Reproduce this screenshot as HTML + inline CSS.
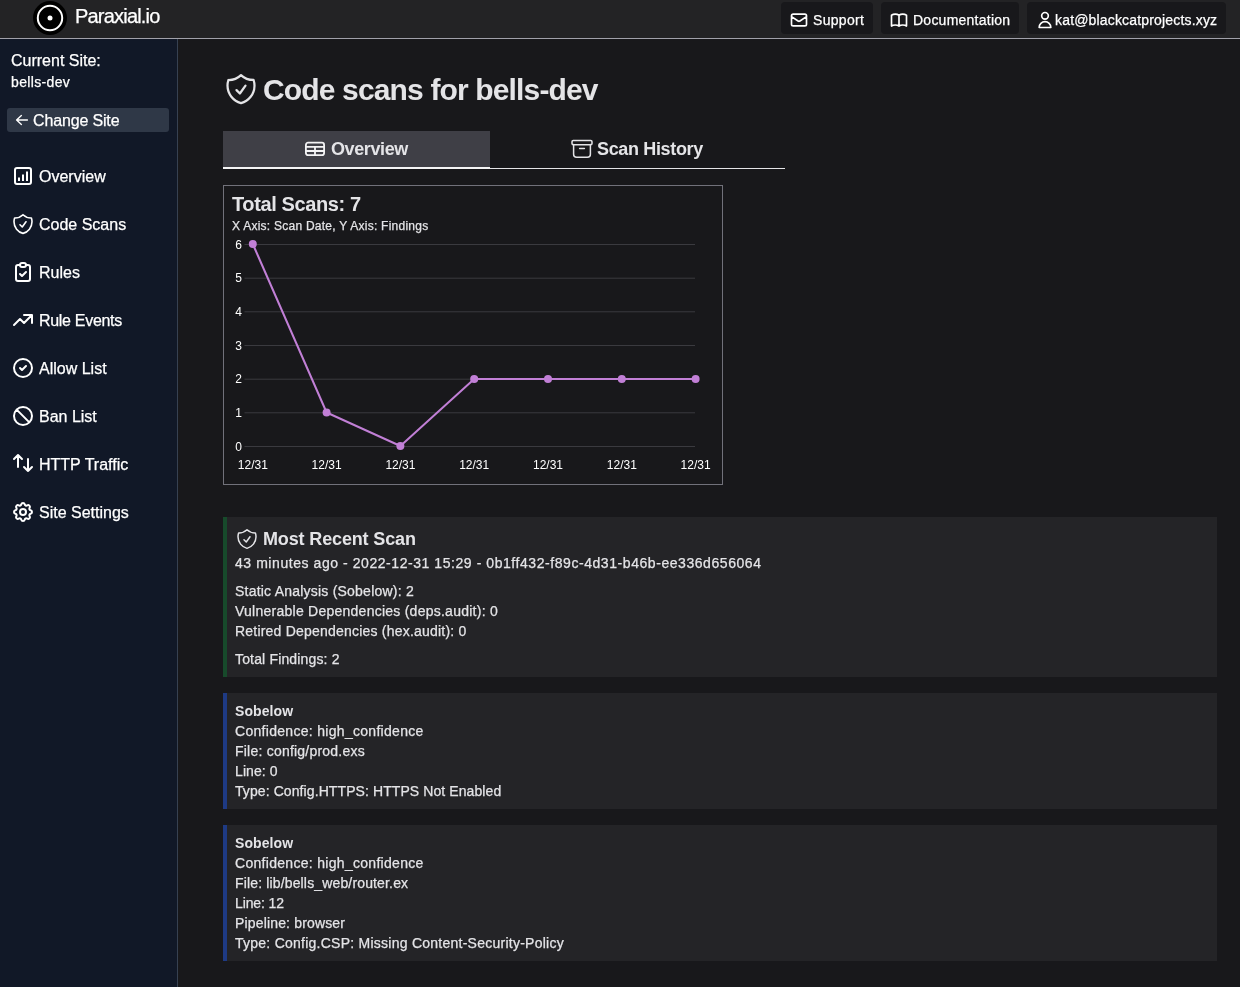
<!DOCTYPE html>
<html><head><meta charset="utf-8">
<style>
html,body{margin:0;padding:0;}
body{width:1240px;height:987px;overflow:hidden;background:#18181b;position:relative;font-family:"Liberation Sans",sans-serif;color:#e4e4e7;}
.a{position:absolute;}
.t{position:absolute;white-space:nowrap;line-height:1;will-change:transform;-webkit-text-stroke:0.25px currentColor;}
.t[style*="font-weight:700"]{-webkit-text-stroke:0;}
svg{position:absolute;overflow:visible;}
.ic{fill:none;stroke:#fff;stroke-width:2;stroke-linecap:round;stroke-linejoin:round;}
#top{left:0;top:0;width:1240px;height:38px;background:#232325;}
#topline{left:0;top:38px;width:1240px;height:1px;background:#a1a1aa;}
.btn{position:absolute;top:2px;height:32px;background:#18181b;border-radius:4px;}
#side{left:0;top:39px;width:177px;height:948px;background:#111827;}
#sideline{left:177px;top:39px;width:1px;height:948px;background:#374151;}
.st{color:#fff;font-size:16px;}
.card{position:absolute;left:223px;width:994px;background:#242427;}
.ct{font-size:14px;color:#e4e4e7;}
</style></head><body>
<!-- top bar -->
<div class="a" id="top"></div>
<div class="a" id="topline"></div>
<svg style="left:33px;top:1px" width="34" height="34" viewBox="0 0 34 34"><circle cx="17" cy="17" r="17" fill="#000"/><circle cx="17" cy="17" r="12.2" fill="none" stroke="#fff" stroke-width="2"/><circle cx="17" cy="17" r="2.5" fill="#fff"/></svg>
<div class="t" style="left:75px;top:6px;font-size:20px;color:#fff;letter-spacing:-0.8px">Paraxial.io</div>

<div class="btn" style="left:781px;width:92px"></div>
<div class="btn" style="left:881px;width:138px"></div>
<div class="btn" style="left:1027px;width:199px"></div>
<svg class="ic" style="left:789px;top:10px" width="20" height="20" viewBox="0 0 24 24"><path d="M3 8l7.89 5.26a2 2 0 002.22 0L21 8M5 19h14a2 2 0 002-2V7a2 2 0 00-2-2H5a2 2 0 00-2 2v10a2 2 0 002 2z"/></svg>
<div class="t" style="left:813px;top:13px;font-size:14px;color:#fff;letter-spacing:0.3px">Support</div>
<svg class="ic" style="left:889px;top:10px" width="20" height="20" viewBox="0 0 24 24"><path d="M12 6.253v13m0-13C10.832 5.477 9.246 5 7.5 5S4.168 5.477 3 6.253v13C4.168 18.477 5.754 18 7.5 18s3.332.477 4.5 1.253m0-13C13.168 5.477 14.754 5 16.5 5c1.747 0 3.332.477 4.5 1.253v13C19.832 18.477 18.247 18 16.5 18c-1.746 0-3.332.477-4.5 1.253"/></svg>
<div class="t" style="left:913px;top:13px;font-size:14px;color:#fff;letter-spacing:0.24px">Documentation</div>
<svg class="ic" style="left:1035px;top:10px" width="20" height="20" viewBox="0 0 24 24"><path d="M16 7a4 4 0 11-8 0 4 4 0 018 0zM12 14a7 7 0 00-7 7h14a7 7 0 00-7-7z"/></svg>
<div class="t" style="left:1055px;top:13px;font-size:14px;color:#fff;letter-spacing:0.17px">kat@blackcatprojects.xyz</div>

<!-- sidebar -->
<div class="a" id="side"></div>
<div class="a" id="sideline"></div>
<div class="t st" style="left:11px;top:53px">Current Site:</div>
<div class="t" style="left:11px;top:75px;font-size:14px;color:#fff;letter-spacing:0.35px">bells-dev</div>
<div class="a" style="left:7px;top:108px;width:162px;height:24px;background:#2f3847;border-radius:3px"></div>
<svg class="ic" style="left:15px;top:113px;stroke-width:1.4" width="14" height="14" viewBox="0 0 14 14"><path d="M1.6 7h10.8M6.4 2.6L1.6 7l4.8 4.4"/></svg>
<div class="t st" style="left:33px;top:113px;letter-spacing:-0.15px">Change Site</div>

<!-- nav icons -->
<svg class="ic" style="left:13px;top:166px" width="20" height="20" viewBox="0 0 20 20"><rect x="2" y="2" width="16" height="16" rx="2"/><path d="M6 11.5v3.5M10 8.5v6.5M14 5.5v9.5" stroke-linecap="butt"/></svg>
<div class="t st" style="left:39px;top:169px">Overview</div>
<svg class="ic" style="left:11px;top:212px;stroke-width:1.6" width="24" height="24" viewBox="0 0 24 24"><path d="M9 12.75L11.25 15 15 9.75m-3-7.036A11.959 11.959 0 013.598 6 11.99 11.99 0 003 9.749c0 5.592 3.824 10.29 9 11.623 5.176-1.332 9-6.03 9-11.622 0-1.31-.21-2.571-.598-3.751h-.152c-3.196 0-6.1-1.248-8.25-3.285z"/></svg>
<div class="t st" style="left:39px;top:217px">Code Scans</div>
<svg class="ic" style="left:11px;top:260px" width="24" height="24" viewBox="0 0 24 24"><path d="M9 5H7a2 2 0 00-2 2v12a2 2 0 002 2h10a2 2 0 002-2V7a2 2 0 00-2-2h-2M9 5a2 2 0 002 2h2a2 2 0 002-2M9 5a2 2 0 012-2h2a2 2 0 012 2m-6 9l2 2 4-4"/></svg>
<div class="t st" style="left:39px;top:265px">Rules</div>
<svg class="ic" style="left:11px;top:308px" width="24" height="24" viewBox="0 0 24 24"><path d="M13 7h8m0 0v8m0-8l-8 8-4-4-6 6"/></svg>
<div class="t st" style="left:39px;top:313px;letter-spacing:-0.3px">Rule Events</div>
<svg class="ic" style="left:11px;top:356px" width="24" height="24" viewBox="0 0 24 24"><path d="M9 12l2 2 4-4m6 2a9 9 0 11-18 0 9 9 0 0118 0z"/></svg>
<div class="t st" style="left:39px;top:361px">Allow List</div>
<svg class="ic" style="left:11px;top:404px" width="24" height="24" viewBox="0 0 24 24"><path d="M18.364 18.364A9 9 0 005.636 5.636m12.728 12.728A9 9 0 015.636 5.636m12.728 12.728L5.636 5.636"/></svg>
<div class="t st" style="left:39px;top:409px">Ban List</div>
<svg class="ic" style="left:11px;top:451px" width="24" height="24" viewBox="0 0 24 24"><path d="M7 16V4m0 0L3 8m4-4l4 4m6 0v12m0 0l4-4m-4 4l-4-4"/></svg>
<div class="t st" style="left:39px;top:457px">HTTP Traffic</div>
<svg class="ic" style="left:11px;top:500px" width="24" height="24" viewBox="0 0 24 24"><path d="M10.325 4.317c.426-1.756 2.924-1.756 3.35 0a1.724 1.724 0 002.573 1.066c1.543-.94 3.31.826 2.37 2.37a1.724 1.724 0 001.065 2.572c1.756.426 1.756 2.924 0 3.35a1.724 1.724 0 00-1.066 2.573c.94 1.543-.826 3.31-2.37 2.37a1.724 1.724 0 00-2.572 1.065c-.426 1.756-2.924 1.756-3.35 0a1.724 1.724 0 00-2.573-1.066c-1.543.94-3.31-.826-2.37-2.37a1.724 1.724 0 00-1.065-2.572c-1.756-.426-1.756-2.924 0-3.35a1.724 1.724 0 001.066-2.573c-.94-1.543.826-3.31 2.37-2.37.996.608 2.296.07 2.572-1.065z"/><path d="M15 12a3 3 0 11-6 0 3 3 0 016 0z"/></svg>
<div class="t st" style="left:39px;top:505px">Site Settings</div>

<!-- MAIN -->

<svg style="left:223px;top:71px" width="36" height="36" viewBox="0 0 24 24" fill="none" stroke="#e4e4e7" stroke-width="1.5" stroke-linecap="round" stroke-linejoin="round"><path d="M9 12.75L11.25 15 15 9.75m-3-7.036A11.959 11.959 0 013.598 6 11.99 11.99 0 003 9.749c0 5.592 3.824 10.29 9 11.623 5.176-1.332 9-6.03 9-11.622 0-1.31-.21-2.571-.598-3.751h-.152c-3.196 0-6.1-1.248-8.25-3.285z"/></svg>
<div class="t" style="left:263px;top:75px;font-size:30px;font-weight:700;color:#e4e4e7;letter-spacing:-0.85px">Code scans for bells-dev</div>

<!-- tabs -->
<div class="a" style="left:223px;top:131px;width:267px;height:36px;background:#3f3f46"></div>
<div class="a" style="left:223px;top:167px;width:267px;height:2px;background:#f4f4f5"></div>
<div class="a" style="left:490px;top:168px;width:295px;height:1px;background:#e4e4e7"></div>
<svg style="left:305px;top:141px" width="20" height="16" viewBox="0 0 20 16" fill="none" stroke="#f4f4f5" stroke-width="1.8" stroke-linecap="round" stroke-linejoin="round"><rect x="0.9" y="1.7" width="18.2" height="12.5" rx="2.2"/><path d="M1 5.9h18M1 10h18M10 5.9v8.3"/></svg>
<div class="t" style="left:331px;top:140px;font-size:18px;font-weight:700;color:#e4e4e7;letter-spacing:-0.4px">Overview</div>
<svg style="left:571px;top:139px" width="22" height="20" viewBox="0 0 22 20" fill="none" stroke="#e4e4e7" stroke-width="1.5" stroke-linecap="round" stroke-linejoin="round"><rect x="1" y="1.6" width="20" height="4.2" rx="1.2"/><path d="M2.6 5.6v9.6a3 3 0 003 3h10.8a3 3 0 003-3V5.6M8.6 9.5h4.8"/></svg>
<div class="t" style="left:597px;top:140px;font-size:18px;font-weight:700;color:#e4e4e7;letter-spacing:-0.35px">Scan History</div>

<!-- chart -->
<div class="a" style="left:223px;top:185px;width:500px;height:300px;box-sizing:border-box;border:1px solid #71717a"></div>
<div class="t" style="left:232px;top:194px;font-size:20px;font-weight:700;color:#e4e4e7;letter-spacing:-0.38px">Total Scans: 7</div>
<div class="t" style="left:232px;top:220px;font-size:12px;color:#e4e4e7;letter-spacing:0.25px">X Axis: Scan Date, Y Axis: Findings</div>
<svg style="left:223px;top:185px" width="500" height="300" viewBox="0 0 500 300">
<g stroke="#3a3a3f" stroke-width="1">
<path d="M21.5 59.5H472M21.5 93.2H472M21.5 126.8H472M21.5 160.5H472M21.5 194.2H472M21.5 227.8H472M21.5 261.5H472"/>
</g>
<g font-family="Liberation Sans" font-size="12" fill="#fff" text-anchor="end">
<text x="19" y="63.5">6</text><text x="19" y="97.2">5</text><text x="19" y="130.8">4</text><text x="19" y="164.5">3</text><text x="19" y="198.2">2</text><text x="19" y="231.8">1</text><text x="19" y="265.5">0</text>
</g>
<polyline points="29.8,59 103.6,227.5 177.4,261 251.2,194 325,194 398.8,194 472.6,194" fill="none" stroke="#c17fd6" stroke-width="2" stroke-linejoin="round"/>
<g fill="#c17fd6">
<circle cx="29.8" cy="59" r="4"/><circle cx="103.6" cy="227.5" r="4"/><circle cx="177.4" cy="261" r="4"/><circle cx="251.2" cy="194" r="4"/><circle cx="325" cy="194" r="4"/><circle cx="398.8" cy="194" r="4"/><circle cx="472.6" cy="194" r="4"/>
</g>
<g font-family="Liberation Sans" font-size="12" fill="#fff" text-anchor="middle">
<text x="29.8" y="283.5">12/31</text><text x="103.6" y="283.5">12/31</text><text x="177.4" y="283.5">12/31</text><text x="251.2" y="283.5">12/31</text><text x="325" y="283.5">12/31</text><text x="398.8" y="283.5">12/31</text><text x="472.6" y="283.5">12/31</text>
</g>
</svg>

<!-- most recent scan -->
<div class="card" style="top:517px;height:160px;border-left:4px solid #174a2b;box-sizing:border-box"></div>
<svg style="left:235px;top:527px" width="24" height="24" viewBox="0 0 24 24" fill="none" stroke="#e4e4e7" stroke-width="1.5" stroke-linecap="round" stroke-linejoin="round"><path d="M9 12.75L11.25 15 15 9.75m-3-7.036A11.959 11.959 0 013.598 6 11.99 11.99 0 003 9.749c0 5.592 3.824 10.29 9 11.623 5.176-1.332 9-6.03 9-11.622 0-1.31-.21-2.571-.598-3.751h-.152c-3.196 0-6.1-1.248-8.25-3.285z"/></svg>
<div class="t" style="left:263px;top:530px;font-size:18px;font-weight:700;color:#e4e4e7;letter-spacing:-0.14px">Most Recent Scan</div>
<div class="t ct" style="left:235px;top:556px;letter-spacing:0.56px">43 minutes ago - 2022-12-31 15:29 - 0b1ff432-f89c-4d31-b46b-ee336d656064</div>
<div class="t ct" style="left:235px;top:584px;letter-spacing:0.22px">Static Analysis (Sobelow): 2</div>
<div class="t ct" style="left:235px;top:604px;letter-spacing:0.25px">Vulnerable Dependencies (deps.audit): 0</div>
<div class="t ct" style="left:235px;top:624px;letter-spacing:0.21px">Retired Dependencies (hex.audit): 0</div>
<div class="t ct" style="left:235px;top:652px;letter-spacing:0.16px">Total Findings: 2</div>

<!-- sobelow 1 -->
<div class="card" style="top:693px;height:116px;border-left:4px solid #1e3a84;box-sizing:border-box"></div>
<div class="t ct" style="left:235px;top:704px;font-weight:700;letter-spacing:0.08px">Sobelow</div>
<div class="t ct" style="left:235px;top:724px;letter-spacing:0.3px">Confidence: high_confidence</div>
<div class="t ct" style="left:235px;top:744px;letter-spacing:0.22px">File: config/prod.exs</div>
<div class="t ct" style="left:235px;top:764px;letter-spacing:0.09px">Line: 0</div>
<div class="t ct" style="left:235px;top:784px;letter-spacing:0.09px">Type: Config.HTTPS: HTTPS Not Enabled</div>

<!-- sobelow 2 -->
<div class="card" style="top:825px;height:136px;border-left:4px solid #1e3a84;box-sizing:border-box"></div>
<div class="t ct" style="left:235px;top:836px;font-weight:700;letter-spacing:0.08px">Sobelow</div>
<div class="t ct" style="left:235px;top:856px;letter-spacing:0.3px">Confidence: high_confidence</div>
<div class="t ct" style="left:235px;top:876px;letter-spacing:0.15px">File: lib/bells_web/router.ex</div>
<div class="t ct" style="left:235px;top:896px;letter-spacing:-0.12px">Line: 12</div>
<div class="t ct" style="left:235px;top:916px;letter-spacing:0.16px">Pipeline: browser</div>
<div class="t ct" style="left:235px;top:936px;letter-spacing:0.25px">Type: Config.CSP: Missing Content-Security-Policy</div>

</body></html>
